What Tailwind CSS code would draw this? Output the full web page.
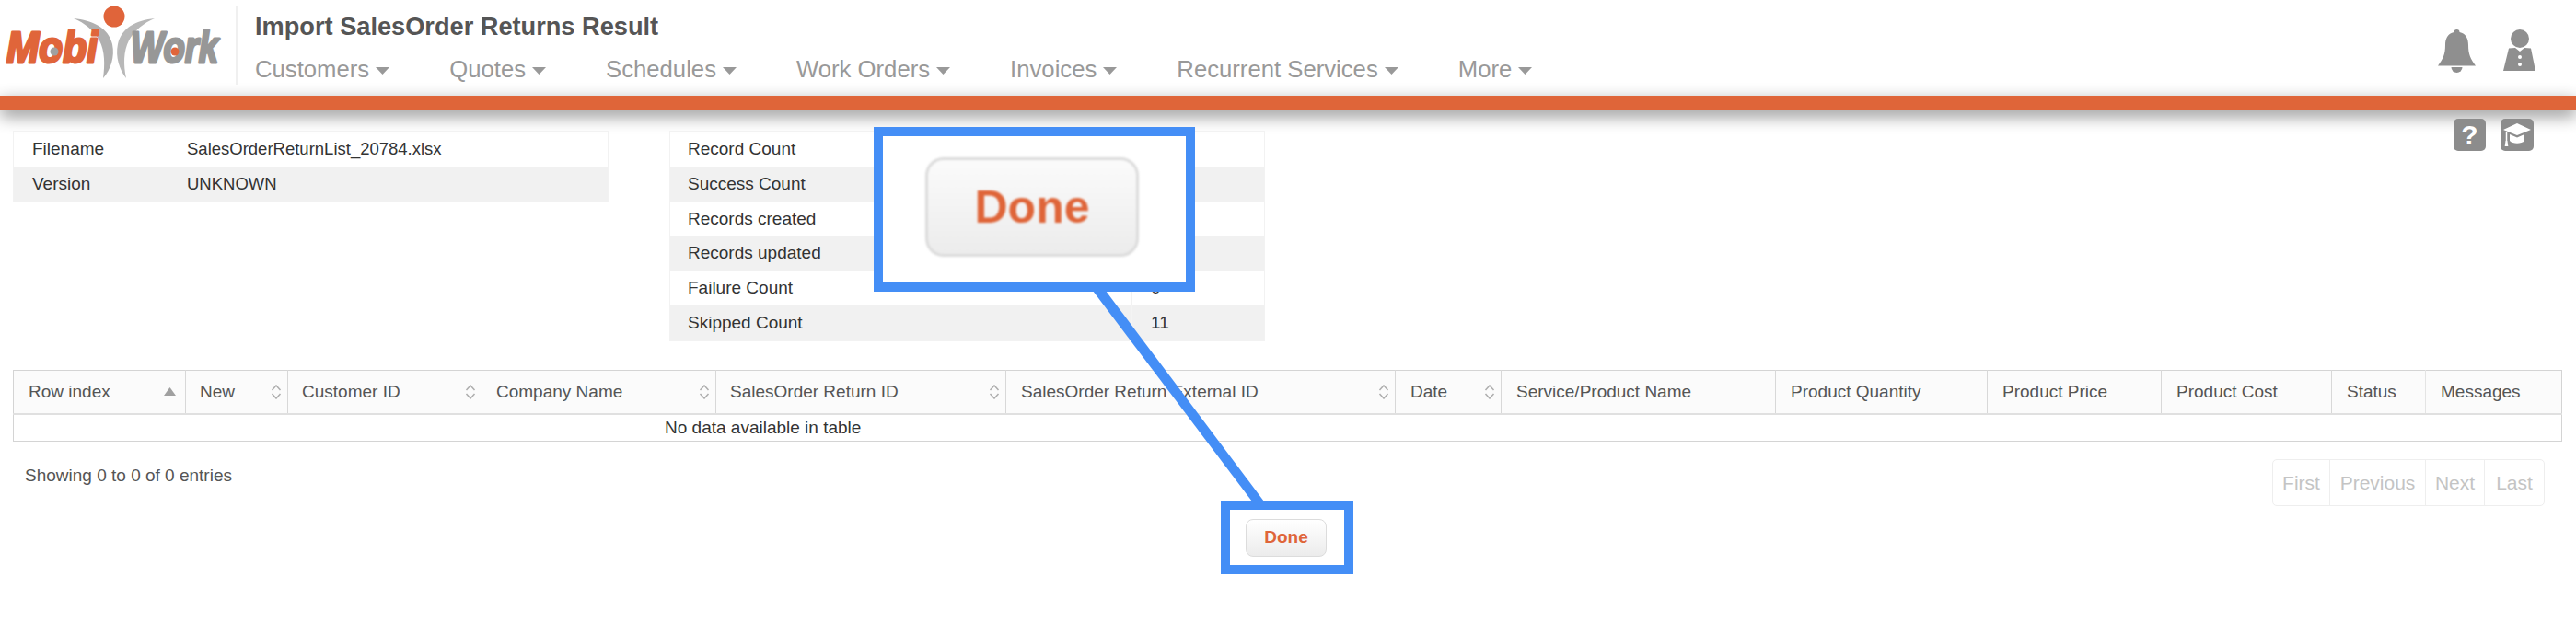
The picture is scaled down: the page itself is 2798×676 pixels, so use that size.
<!DOCTYPE html>
<html lang="en">
<head>
    <meta charset="UTF-8">
    <title>Import SalesOrder Returns Result</title>
    <script src="https://cdn.jsdelivr.net/npm/@tailwindcss/browser@4"></script>
</head>
<body class="relative h-[676px] w-[2798px] overflow-hidden bg-white font-['Liberation_Sans',Arial,sans-serif] text-[19px] text-[#333]">

    <!-- header -->
    <header class="flex h-[104px] items-start bg-white">
        <svg class="h-[104px] w-[256px] shrink-0" viewBox="0 0 256 104">
            <path d="M80 20C100 22 118 30 122 48 125 62 120 76 112 85 114 70 114 56 108 44 102 33 92 25 80 20z" fill="#b0b0b0"/>
            <path d="M168 20C148 22 132 30 128 48 125 62 130 76 137 85 134 70 134 56 140 44 146 33 156 25 168 20z" fill="#b8b8b8"/>
            <circle cx="124" cy="18" r="11.5" fill="#e0643a"/>
            <text x="7" y="68" font-size="48" font-weight="700" font-style="italic" fill="#e0653a" stroke="#e0653a" stroke-width="3" stroke-linejoin="round" textLength="99" lengthAdjust="spacingAndGlyphs">Mobi</text>
            <circle cx="59" cy="56" r="4.500" fill="#a0a0a0"/>
            <text x="142" y="68" font-size="48" font-weight="700" font-style="italic" fill="#979797" stroke="#979797" stroke-width="3" stroke-linejoin="round" textLength="95" lengthAdjust="spacingAndGlyphs">Work</text>
            <circle cx="190" cy="56" r="4.500" fill="#e0653a"/>
        </svg>
        <div class="mt-[6px] h-[86px] w-[3px] shrink-0 bg-[#f0f0f0]"></div>
        <div class="ml-[18px] flex flex-col">
            <h1 class="mt-[12px] h-[34px] text-[27.2px] leading-[34px] font-bold text-[#555]">Import SalesOrder Returns Result</h1>
            <nav class="mt-[14px] flex items-center gap-[65px] text-[25.7px] leading-[30px] text-[#999]">
                <a class="flex items-center gap-[7px]">Customers <svg class="mt-[3px] h-[8px] w-[15px]" viewBox="0 0 15 8"><path d="M0 0h15L7.500 8z" fill="#999"/></svg></a>
                <a class="flex items-center gap-[7px]">Quotes <svg class="mt-[3px] h-[8px] w-[15px]" viewBox="0 0 15 8"><path d="M0 0h15L7.500 8z" fill="#999"/></svg></a>
                <a class="flex items-center gap-[7px]">Schedules <svg class="mt-[3px] h-[8px] w-[15px]" viewBox="0 0 15 8"><path d="M0 0h15L7.500 8z" fill="#999"/></svg></a>
                <a class="flex items-center gap-[7px]">Work Orders <svg class="mt-[3px] h-[8px] w-[15px]" viewBox="0 0 15 8"><path d="M0 0h15L7.500 8z" fill="#999"/></svg></a>
                <a class="flex items-center gap-[7px]">Invoices <svg class="mt-[3px] h-[8px] w-[15px]" viewBox="0 0 15 8"><path d="M0 0h15L7.500 8z" fill="#999"/></svg></a>
                <a class="flex items-center gap-[7px]">Recurrent Services <svg class="mt-[3px] h-[8px] w-[15px]" viewBox="0 0 15 8"><path d="M0 0h15L7.500 8z" fill="#999"/></svg></a>
                <a class="flex items-center gap-[7px]">More <svg class="mt-[3px] h-[8px] w-[15px]" viewBox="0 0 15 8"><path d="M0 0h15L7.500 8z" fill="#999"/></svg></a>
            </nav>
        </div>
        <div class="mt-[32px] mr-[44px] ml-auto flex items-start gap-[30px]">
            <svg class="h-[47px] w-[41px]" viewBox="0 0 41 47"><path d="M20.500 0a3 3 0 0 1 3 3c7 1.500 9.500 7 9.500 14 0 10 2.500 15 8 22.500H0c5.500-7.500 8-12.500 8-22.500 0-7 2.500-12.500 9.500-14a3 3 0 0 1 3-3z" fill="#8f8f8f"/><path d="M14.500 41a6 6 0 0 0 12 0z" fill="#8f8f8f"/></svg>
            <svg class="h-[46px] w-[35px]" viewBox="0 0 35 46"><circle cx="18" cy="10" r="10" fill="#8f8f8f"/><path d="M6 20.500 13 20 18 24 23 20 30 20.500 35 45H0z" fill="#8f8f8f"/><circle cx="18" cy="30" r="2" fill="#fff"/><circle cx="18" cy="38" r="2" fill="#fff"/></svg>
        </div>
    </header>
    <div class="h-[16px] bg-[#df6539] shadow-[0_6px_18px_0_rgba(0,0,0,0.45)]"></div>

    <!-- import summary -->
    <section class="relative flex items-start pt-[22px] pl-[14px]">
        <table class="w-[647px] table-fixed border border-[#f2f2f2]">
            <tbody>
                <tr class="h-[38px]"><td class="w-[168px] pl-[20px]">Filename</td><td class="border-l border-[#f2f2f2] pl-[20px] text-[18.5px]">SalesOrderReturnList_20784.xlsx</td></tr>
                <tr class="h-[39px] bg-[#f1f1f1]"><td class="pl-[20px]">Version</td><td class="border-l border-[#f4f4f4] pl-[20px] text-[18.5px]">UNKNOWN</td></tr>
            </tbody>
        </table>
        <table class="ml-[66px] w-[647px] table-fixed border border-[#f2f2f2]">
            <tbody>
                <tr class="h-[38px]"><td class="pl-[19px]">Record Count</td><td class="w-[144px] border-l border-[#f2f2f2] pl-[20px]">11</td></tr>
                <tr class="h-[39px] bg-[#f1f1f1]"><td class="pl-[19px]">Success Count</td><td class="border-l border-[#f4f4f4] pl-[20px]">0</td></tr>
                <tr class="h-[37px]"><td class="pl-[19px]">Records created</td><td class="border-l border-[#f2f2f2] pl-[20px]">0</td></tr>
                <tr class="h-[38px] bg-[#f1f1f1]"><td class="pl-[19px]">Records updated</td><td class="border-l border-[#f4f4f4] pl-[20px]">0</td></tr>
                <tr class="h-[37px]"><td class="pl-[19px]">Failure Count</td><td class="border-l border-[#f2f2f2] pl-[20px]">0</td></tr>
                <tr class="h-[39px] bg-[#f1f1f1]"><td class="pl-[19px]">Skipped Count</td><td class="border-l border-[#f4f4f4] pl-[20px]">11</td></tr>
            </tbody>
        </table>
        <div class="absolute top-[9px] right-[46px] flex gap-[16px]">
            <span class="flex h-[35px] w-[35px] items-center justify-center rounded-[5px] bg-[#8c8c8c] text-[30px] font-bold text-white">?</span>
            <span class="flex h-[35px] w-[36px] items-center justify-center rounded-[5px] bg-[#8c8c8c]">
                <svg class="h-[26px] w-[30px]" viewBox="0 0 30 26"><path d="M15 0 30 7 15 13 0 7z" fill="#fff"/><path d="M7 12v7c3 3.500 13 3.500 16 0v-7l-8 3.500z" fill="#fff"/><path d="M3.500 9v10" stroke="#fff" stroke-width="1.500"/><path d="M2.500 19h2l.800 6H1.700z" fill="#fff"/></svg>
            </span>
        </div>
    </section>

    <!-- results table -->
    <div class="mt-[31px] ml-[14px] w-[2769px]">
        <table class="w-full table-fixed border border-[#d4d4d4] text-[#555]">
            <thead>
                <tr class="h-[47px] border-b-2 border-[#e0e0e0] bg-[#fbfbfb] text-left font-normal">
                    <th class="w-[187px] border-r border-[#d8d8d8] pl-[16px] font-normal"><span class="flex items-center justify-between pr-[10px]">Row index <svg class="h-[9px] w-[13px]" viewBox="0 0 13 9"><path d="M6.500 0 13 9H0z" fill="#a0a0a0"/></svg></span></th>
                    <th class="w-[111px] border-r border-[#d8d8d8] pl-[15px] font-normal"><span class="flex items-center justify-between pr-[6px]">New <svg class="h-[16px] w-[12px]" viewBox="0 0 12 16"><path d="M1.500 6 6 1l4.500 5M1.500 10 6 15l4.500-5" fill="none" stroke="#adadad" stroke-width="1.500"/></svg></span></th>
                    <th class="w-[211px] border-r border-[#d8d8d8] pl-[15px] font-normal"><span class="flex items-center justify-between pr-[6px]">Customer ID <svg class="h-[16px] w-[12px]" viewBox="0 0 12 16"><path d="M1.500 6 6 1l4.500 5M1.500 10 6 15l4.500-5" fill="none" stroke="#adadad" stroke-width="1.500"/></svg></span></th>
                    <th class="w-[254px] border-r border-[#d8d8d8] pl-[15px] font-normal"><span class="flex items-center justify-between pr-[6px]">Company Name <svg class="h-[16px] w-[12px]" viewBox="0 0 12 16"><path d="M1.500 6 6 1l4.500 5M1.500 10 6 15l4.500-5" fill="none" stroke="#adadad" stroke-width="1.500"/></svg></span></th>
                    <th class="w-[315px] border-r border-[#d8d8d8] pl-[15px] font-normal"><span class="flex items-center justify-between pr-[6px]">SalesOrder Return ID <svg class="h-[16px] w-[12px]" viewBox="0 0 12 16"><path d="M1.500 6 6 1l4.500 5M1.500 10 6 15l4.500-5" fill="none" stroke="#adadad" stroke-width="1.500"/></svg></span></th>
                    <th class="w-[423px] border-r border-[#d8d8d8] pl-[16px] font-normal"><span class="flex items-center justify-between pr-[6px]">SalesOrder Return External ID <svg class="h-[16px] w-[12px]" viewBox="0 0 12 16"><path d="M1.500 6 6 1l4.500 5M1.500 10 6 15l4.500-5" fill="none" stroke="#adadad" stroke-width="1.500"/></svg></span></th>
                    <th class="w-[115px] border-r border-[#d8d8d8] pl-[16px] font-normal"><span class="flex items-center justify-between pr-[6px]">Date <svg class="h-[16px] w-[12px]" viewBox="0 0 12 16"><path d="M1.500 6 6 1l4.500 5M1.500 10 6 15l4.500-5" fill="none" stroke="#adadad" stroke-width="1.500"/></svg></span></th>
                    <th class="w-[298px] border-r border-[#d8d8d8] pl-[16px] font-normal">Service/Product Name</th>
                    <th class="w-[230px] border-r border-[#d8d8d8] pl-[16px] font-normal">Product Quantity</th>
                    <th class="w-[189px] border-r border-[#d8d8d8] pl-[16px] font-normal">Product Price</th>
                    <th class="w-[185px] border-r border-[#d8d8d8] pl-[16px] font-normal">Product Cost</th>
                    <th class="w-[102px] border-r border-[#e4e4e4] pl-[16px] font-normal">Status</th>
                    <th class="pl-[16px] font-normal">Messages</th>
                </tr>
            </thead>
            <tbody>
                <tr class="h-[30px]"><td colspan="13" class="pl-[707px] text-[#333]">No data available in table</td></tr>
            </tbody>
        </table>
    </div>

    <!-- table footer -->
    <div class="mt-[19px] mr-[34px] ml-[27px] flex items-start justify-between">
        <span class="mt-[4px] text-[#555]">Showing 0 to 0 of 0 entries</span>
        <div class="flex h-[51px] items-center divide-x divide-[#eeeeee] rounded-[5px] border border-[#eeeeee] text-[21px] text-[#c4c4c4]">
            <a class="flex h-full w-[62px] items-center justify-center">First</a>
            <a class="flex h-full w-[104px] items-center justify-center">Previous</a>
            <a class="flex h-full w-[64px] items-center justify-center">Next</a>
            <a class="flex h-full w-[64px] items-center justify-center">Last</a>
        </div>
    </div>

    <div class="mt-[14px] flex justify-center">
        <button class="ml-[-4px] h-[41px] w-[88px] rounded-[8px] border border-[#dcdcdc] bg-gradient-to-b from-white to-[#ececec] text-[19px] font-bold text-[#df6539]">Done</button>
    </div>

    <!-- annotation: callouts and connector -->
    <svg class="pointer-events-none absolute top-0 left-0" width="2798" height="676"><path d="M1187 316H1201L1373 545H1360z" fill="#448ef6"/></svg>
    <div class="absolute top-[138px] left-[949px] flex h-[179px] w-[349px] items-center justify-center border-[10px] border-[#448ef6] bg-white">
        <div class="ml-[-5px] mt-[-5px] flex h-[108px] w-[232px] items-center justify-center rounded-[20px] border-[3px] border-[#dcdcdc] bg-gradient-to-b from-[#fbfbfb] to-[#ececec] text-[50px] font-bold text-[#df6539] blur-[0.8px]">Done</div>
    </div>
    <div class="absolute top-[544px] left-[1326px] h-[80px] w-[144px] border-[10px] border-[#448ef6]"></div>
</body>
</html>
